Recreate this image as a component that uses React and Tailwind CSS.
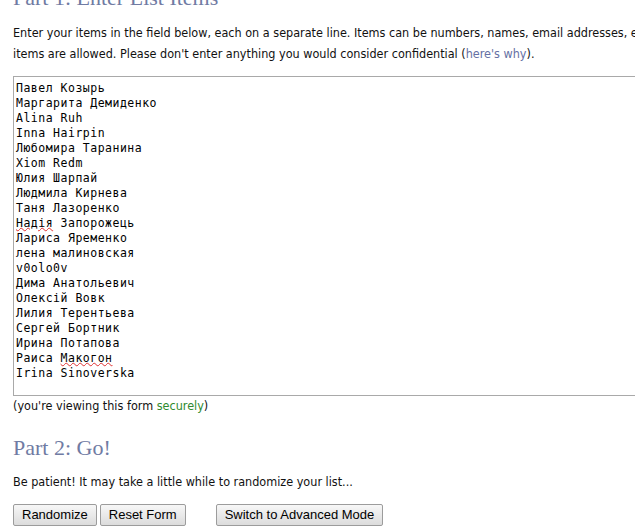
import React from "react";

// [texto, palabra subrayada por el corrector]
const names = [
  ["Павел Козырь"],
  ["Маргарита Демиденко"],
  ["Alina Ruh"],
  ["Inna Hairpin"],
  ["Любомира Таранина"],
  ["Xiom Redm"],
  ["Юлия Шарпай"],
  ["Людмила Кирнева"],
  ["Таня Лазоренко"],
  ["Надія Запорожець", "Надія"],
  ["Лариса Яременко"],
  ["лена малиновская"],
  ["v0olo0v"],
  ["Дима Анатольевич"],
  ["Олексій Вовк"],
  ["Лилия Терентьева"],
  ["Сергей Бортник"],
  ["Ирина Потапова"],
  ["Раиса Макогон", "Макогон"],
  ["Irina Sinoverska"],
];

const btn =
  "h-[22px] px-[8px] border border-[#9c9c9c] rounded-[2px] bg-gradient-to-b from-[#f7f7f7] to-[#dcdcdc] text-[13px] leading-[20px] text-black font-['Liberation_Sans',Arial,sans-serif]";

const Line = ({ text, mark }) => {
  if (!mark) return <div className="whitespace-pre">{text}</div>;
  const i = text.indexOf(mark);
  return (
    <div className="whitespace-pre">
      {text.slice(0, i)}
      <span className="underline decoration-wavy decoration-[#e03030] decoration-1 underline-offset-[0px]">{mark}</span>
      {text.slice(i + mark.length)}
    </div>
  );
};

export default function App() {
  return (
    <div className="w-[635px] h-[530px] overflow-hidden bg-white text-[#111] font-['DejaVu_Sans_Condensed','DejaVu_Sans',sans-serif] font-stretch-condensed text-[12.5px]">
      <div className="w-[900px] pl-[13px] -mt-[15px]">
        {/* Parte 1 */}
        <h2 className="text-[22px] leading-[26px] text-[#707ba3] font-['Liberation_Serif',Georgia,serif] font-normal">
          Part 1: Enter List Items
        </h2>
        <p className="mt-[11px] leading-[21px] whitespace-nowrap">
          Enter your items in the field below, each on a separate line. Items can be numbers, names, email addresses, etc. A maximum of 10,000
          <br />
          items are allowed. Please don't enter anything you would consider confidential (
          <a className="text-[#6570a3]">here's why</a>).
        </p>

        <div className="mt-[12px] w-[700px] h-[320px] border border-[#a9a9a9] pt-[4px] pl-[2px] font-['DejaVu_Sans_Mono',monospace] font-stretch-normal text-[11.5px] leading-[15px] tracking-[0.5px] text-black">
          {names.map(([t, m], i) => (
            <Line key={i} text={t} mark={m} />
          ))}
        </div>
        <p className="mt-[1px] leading-[17px]">
          (you're viewing this form <a className="text-[#2f8a2f]">securely</a>)
        </p>

        {/* Parte 2 */}
        <h2 className="mt-[21px] text-[22px] leading-[26px] text-[#707ba3] font-['Liberation_Serif',Georgia,serif] font-normal">
          Part 2: Go!
        </h2>
        <p className="mt-[12px] leading-[17px]">
          Be patient! It may take a little while to randomize your list...
        </p>
        <div className="mt-[14px] flex items-center">
          <button className={btn}>Randomize</button>
          <button className={`${btn} ml-[3px]`}>Reset Form</button>
          <button className={`${btn} ml-[30px]`}>Switch to Advanced Mode</button>
        </div>
      </div>
    </div>
  );
}
